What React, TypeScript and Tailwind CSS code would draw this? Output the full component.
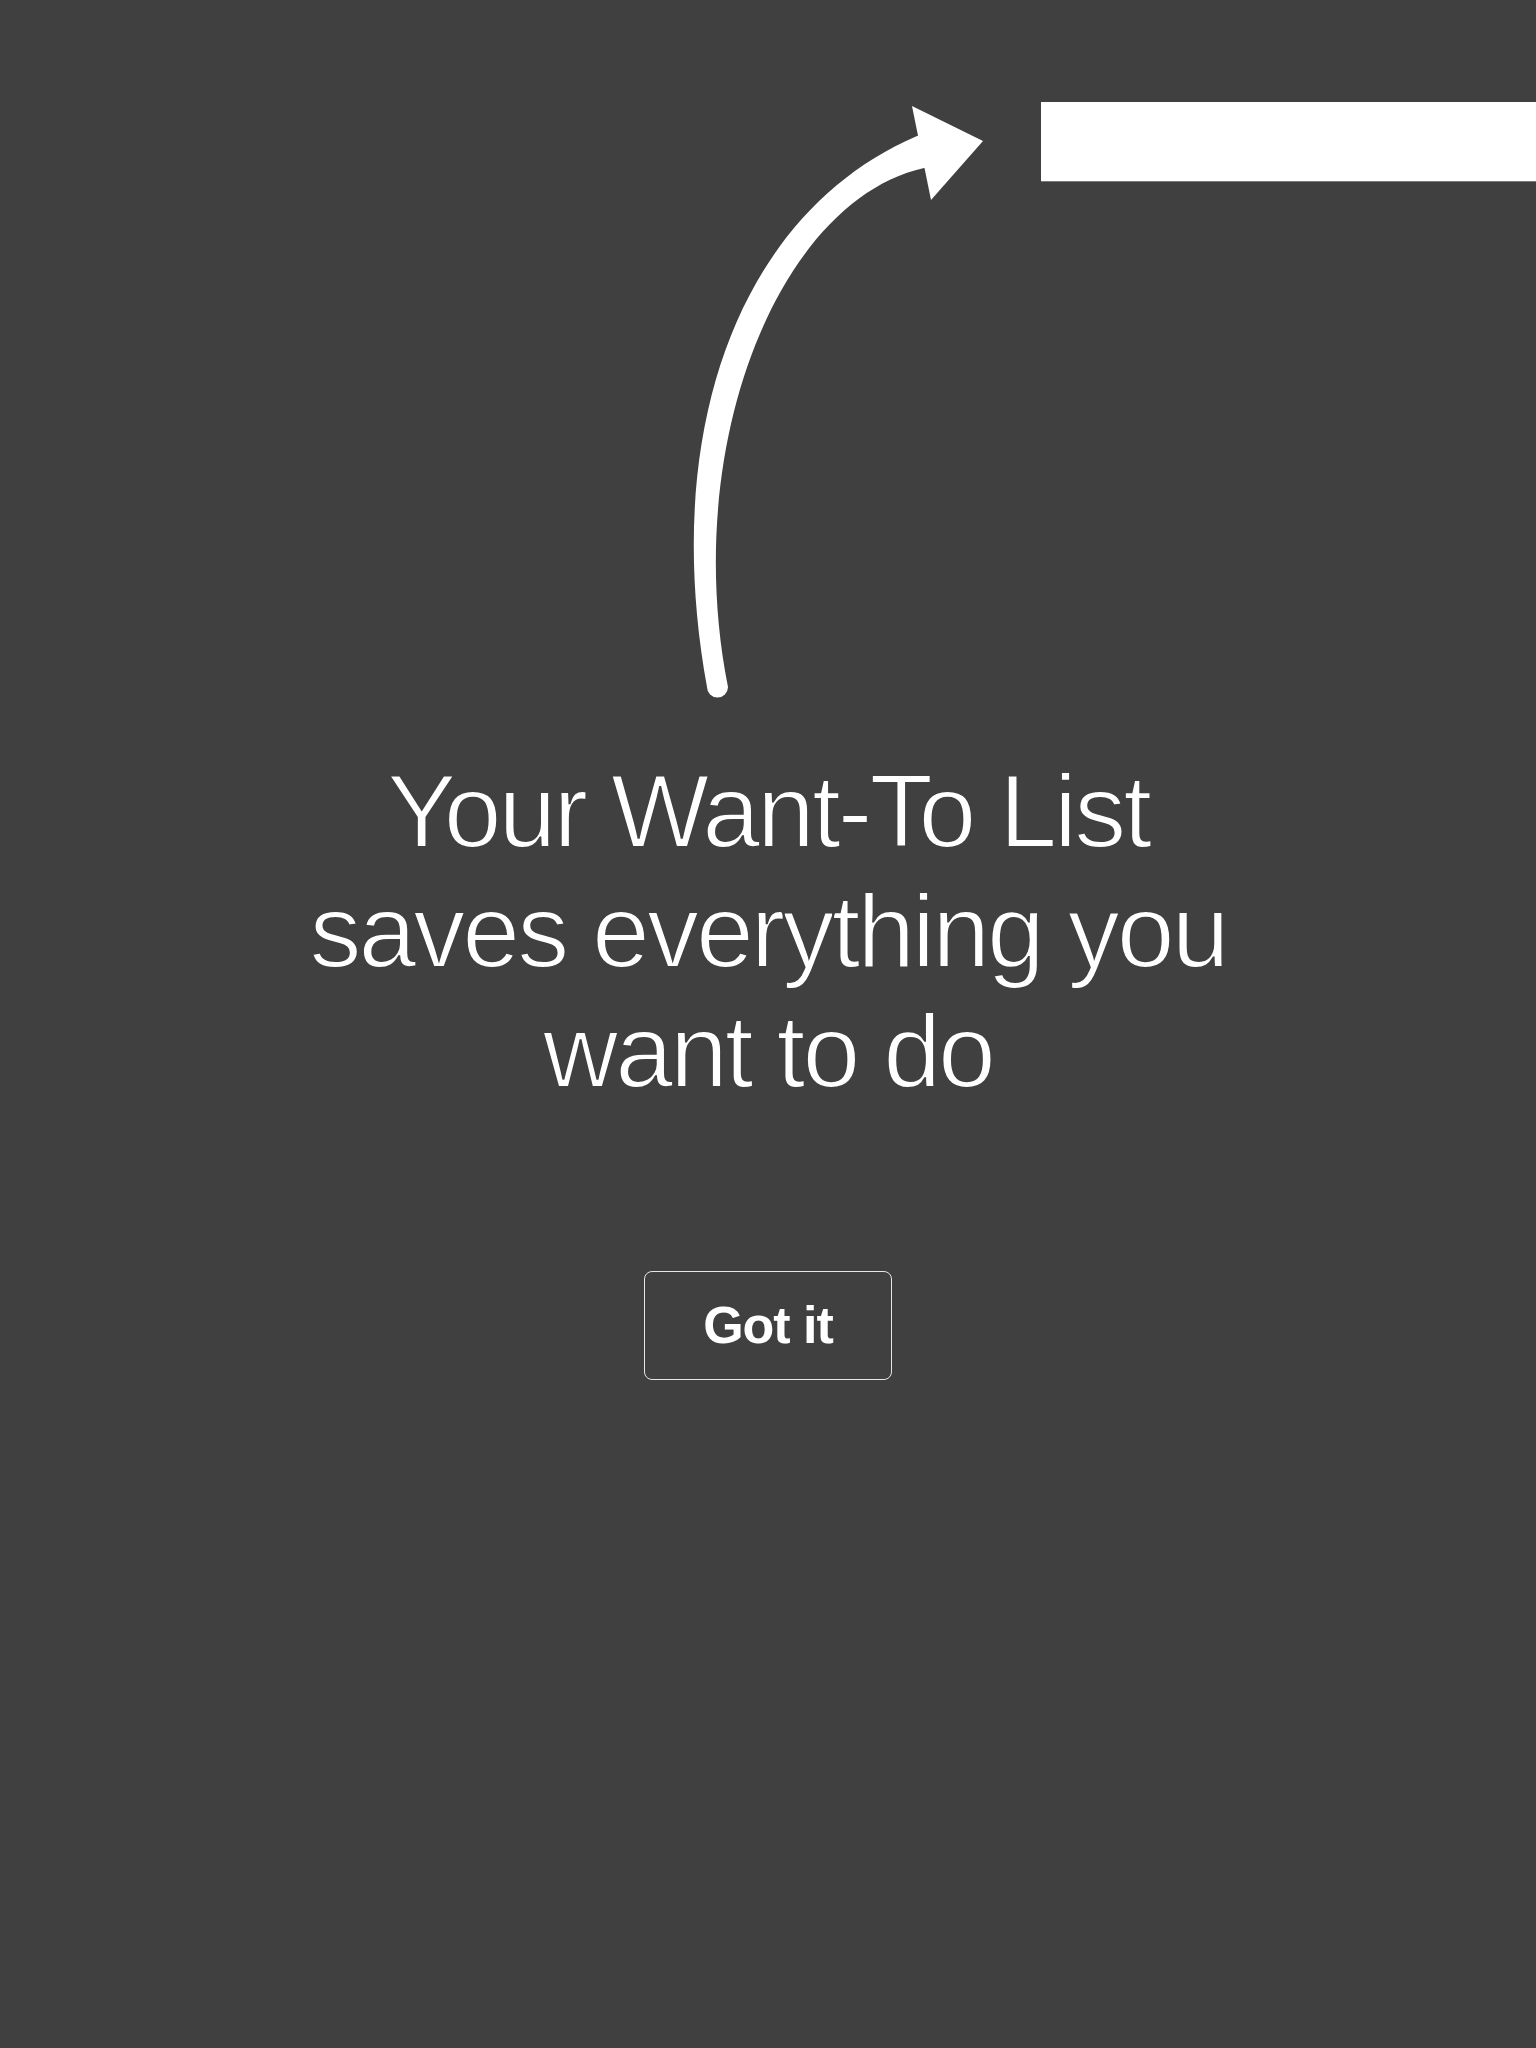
import React from "react";

function Arrow() {
  return (
    <svg
      className="pointer-events-none absolute left-0 top-0"
      width="1536"
      height="720"
      viewBox="0 0 1536 720"
      aria-hidden="true"
    >
      <path
        d="M 707 687 C 660 429, 740 212, 917 136 L 925 134 L 932 170 L 924 168 C 780 200, 680 444, 728 687 A 10.5 10.5 0 0 1 707 687 Z"
        fill="#ffffff"
      />
      <polygon points="912,106 983,141 931,200" fill="#ffffff" />
    </svg>
  );
}

export default function App() {
  return (
    <div className="relative min-h-[2048px] w-full bg-[#404040] font-['Liberation_Sans',Arial,sans-serif] text-white">
      <div className="flex justify-end pt-[102px]">
        <div className="h-[80px] w-[495px] border-b border-[#7a7a7a] bg-white" />
      </div>
      <Arrow />
      <h1 className="mt-[569px] text-center text-[104px] font-normal leading-[120px] tracking-[-3px] [-webkit-text-stroke:2px_#404040] [paint-order:fill_stroke]">
        <span className="block">Your Want-To List</span>
        <span className="block">saves everything you</span>
        <span className="block">want to do</span>
      </h1>
      <div className="mt-[160px] flex justify-center">
        <button
          type="button"
          className="h-[109px] w-[248px] rounded-lg border border-[#e6e6e6] text-[52px] font-bold leading-[107px] tracking-[-1px] text-white"
        >
          Got it
        </button>
      </div>
    </div>
  );
}
